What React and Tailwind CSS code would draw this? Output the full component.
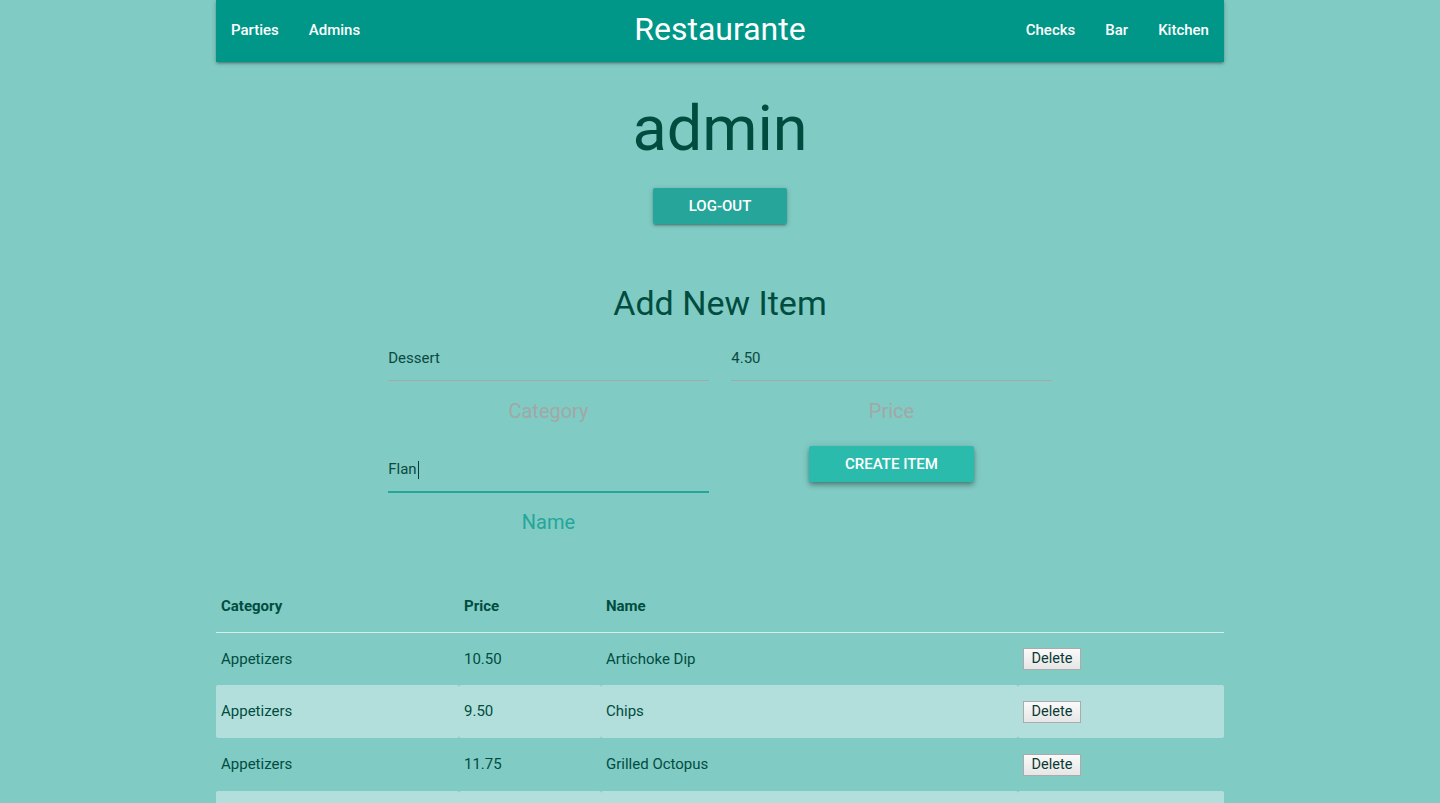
const items = [
  { category: 'Appetizers', price: '10.50', name: 'Artichoke Dip' },
  { category: 'Appetizers', price: '9.50', name: 'Chips' },
  { category: 'Appetizers', price: '11.75', name: 'Grilled Octopus' },
  { category: 'Appetizers', price: '8.25', name: 'Nachos' },
  { category: 'Entrees', price: '18.00', name: 'Steak Frites' },
  { category: 'Entrees', price: '16.50', name: 'Salmon' },
];

function NavLink({ children }) {
  return <a className="px-[15px] text-[15px] font-medium text-white">{children}</a>;
}

function Field({ value, label, active }) {
  return (
    <div className="flex flex-col px-[11.25px]">
      <div
        className={
          active
            ? 'flex h-[45px] items-center border-b-2 border-[#26a69a] text-[15px] text-[#0b4a40]'
            : 'flex h-[46px] items-center border-b border-[#a8a8a8] pt-[2px] text-[15px] text-[#0b4a40]'
        }
      >
        {value}
        {active && <span className="ml-[1px] inline-block h-[18px] w-px bg-[#0b3a33]" />}
      </div>
      <div
        className={
          active
            ? 'mt-[15px] text-center text-[20px] leading-[28px] text-[#26a69a]'
            : 'mt-[16px] text-center text-[20px] leading-[28px] text-[#a2a8a6]'
        }
      >
        {label}
      </div>
    </div>
  );
}

export default function App() {
  return (
    <div className="min-h-[803px] bg-[#80cbc4] font-['Roboto',sans-serif] text-[#004d40]">
      <nav className="relative z-10 mx-auto flex h-[62px] w-[1008px] items-center justify-between bg-[#009688] pb-[2px] shadow-[0_2px_2px_0_rgba(0,0,0,0.14),0_3px_1px_-2px_rgba(0,0,0,0.12),0_1px_5px_0_rgba(0,0,0,0.2)]">
        <div className="flex w-[300px]">
          <NavLink>Parties</NavLink>
          <NavLink>Admins</NavLink>
        </div>
        <div className="pb-[2px] text-[32px] leading-none text-white">Restaurante</div>
        <div className="flex w-[300px] justify-end">
          <NavLink>Checks</NavLink>
          <NavLink>Bar</NavLink>
          <NavLink>Kitchen</NavLink>
        </div>
      </nav>

      <div className="mx-auto w-[1008px]">
        <h1 className="mt-[31.5px] text-center text-[63px] leading-[69px] text-[#004d40]">admin</h1>
        <div className="mt-[25.5px] flex justify-center">
          <button className="h-[36px] w-[134px] rounded-[2px] bg-[#26a69a] text-[15px] font-medium uppercase text-white shadow-[0_2px_2px_0_rgba(0,0,0,0.14),0_3px_1px_-2px_rgba(0,0,0,0.12),0_1px_5px_0_rgba(0,0,0,0.2)]">
            Log-out
          </button>
        </div>

        <h4 className="mt-[60px] text-center text-[34px] leading-[38px] text-[#004d40]">Add New Item</h4>

        <div className="mx-auto mt-[13px] grid w-[686px] grid-cols-2">
          <div className="flex flex-col">
            <Field value="Dessert" label="Category" />
            <div className="mt-[23px]">
              <Field value="Flan" label="Name" active />
            </div>
          </div>
          <div className="flex flex-col">
            <Field value="4.50" label="Price" />
            <div className="mt-[21px] flex justify-center">
              <button className="h-[36px] w-[165px] rounded-[2px] bg-[#2bbbad] text-[15px] font-medium uppercase text-white shadow-[0_4px_5px_0_rgba(0,0,0,0.14),0_1px_10px_0_rgba(0,0,0,0.12),0_2px_4px_-1px_rgba(0,0,0,0.3)]">
                Create Item
              </button>
            </div>
          </div>
        </div>

        <table className="mt-[44px] w-full table-fixed border-collapse text-left text-[15px]">
          <colgroup>
            <col className="w-[243px]" />
            <col className="w-[142px]" />
            <col className="w-[417px]" />
            <col className="w-[206px]" />
          </colgroup>
          <thead>
            <tr className="h-[52px] border-b border-[#d6eeeb]">
              <th className="px-[5px] font-bold">Category</th>
              <th className="px-[5px] font-bold">Price</th>
              <th className="px-[5px] font-bold">Name</th>
              <th className="px-[5px]" />
            </tr>
          </thead>
          <tbody>
            {items.map((item, i) => {
              const cell = i % 2 === 1 ? 'h-[53px] rounded-[2px] bg-[#b2dfdb] px-[5px]' : 'h-[53px] px-[5px]';
              return (
                <tr key={item.name}>
                  <td className={cell}>{item.category}</td>
                  <td className={cell}>{item.price}</td>
                  <td className={cell}>{item.name}</td>
                  <td className={cell}>
                    <button className="h-[22px] w-[58px] border border-[#ababab] bg-gradient-to-b from-[#fafafa] to-[#e6e6e6] font-['Roboto',sans-serif] text-[14.5px] leading-none text-[#0b3a33]">
                      Delete
                    </button>
                  </td>
                </tr>
              );
            })}
          </tbody>
        </table>
      </div>
    </div>
  );
}
